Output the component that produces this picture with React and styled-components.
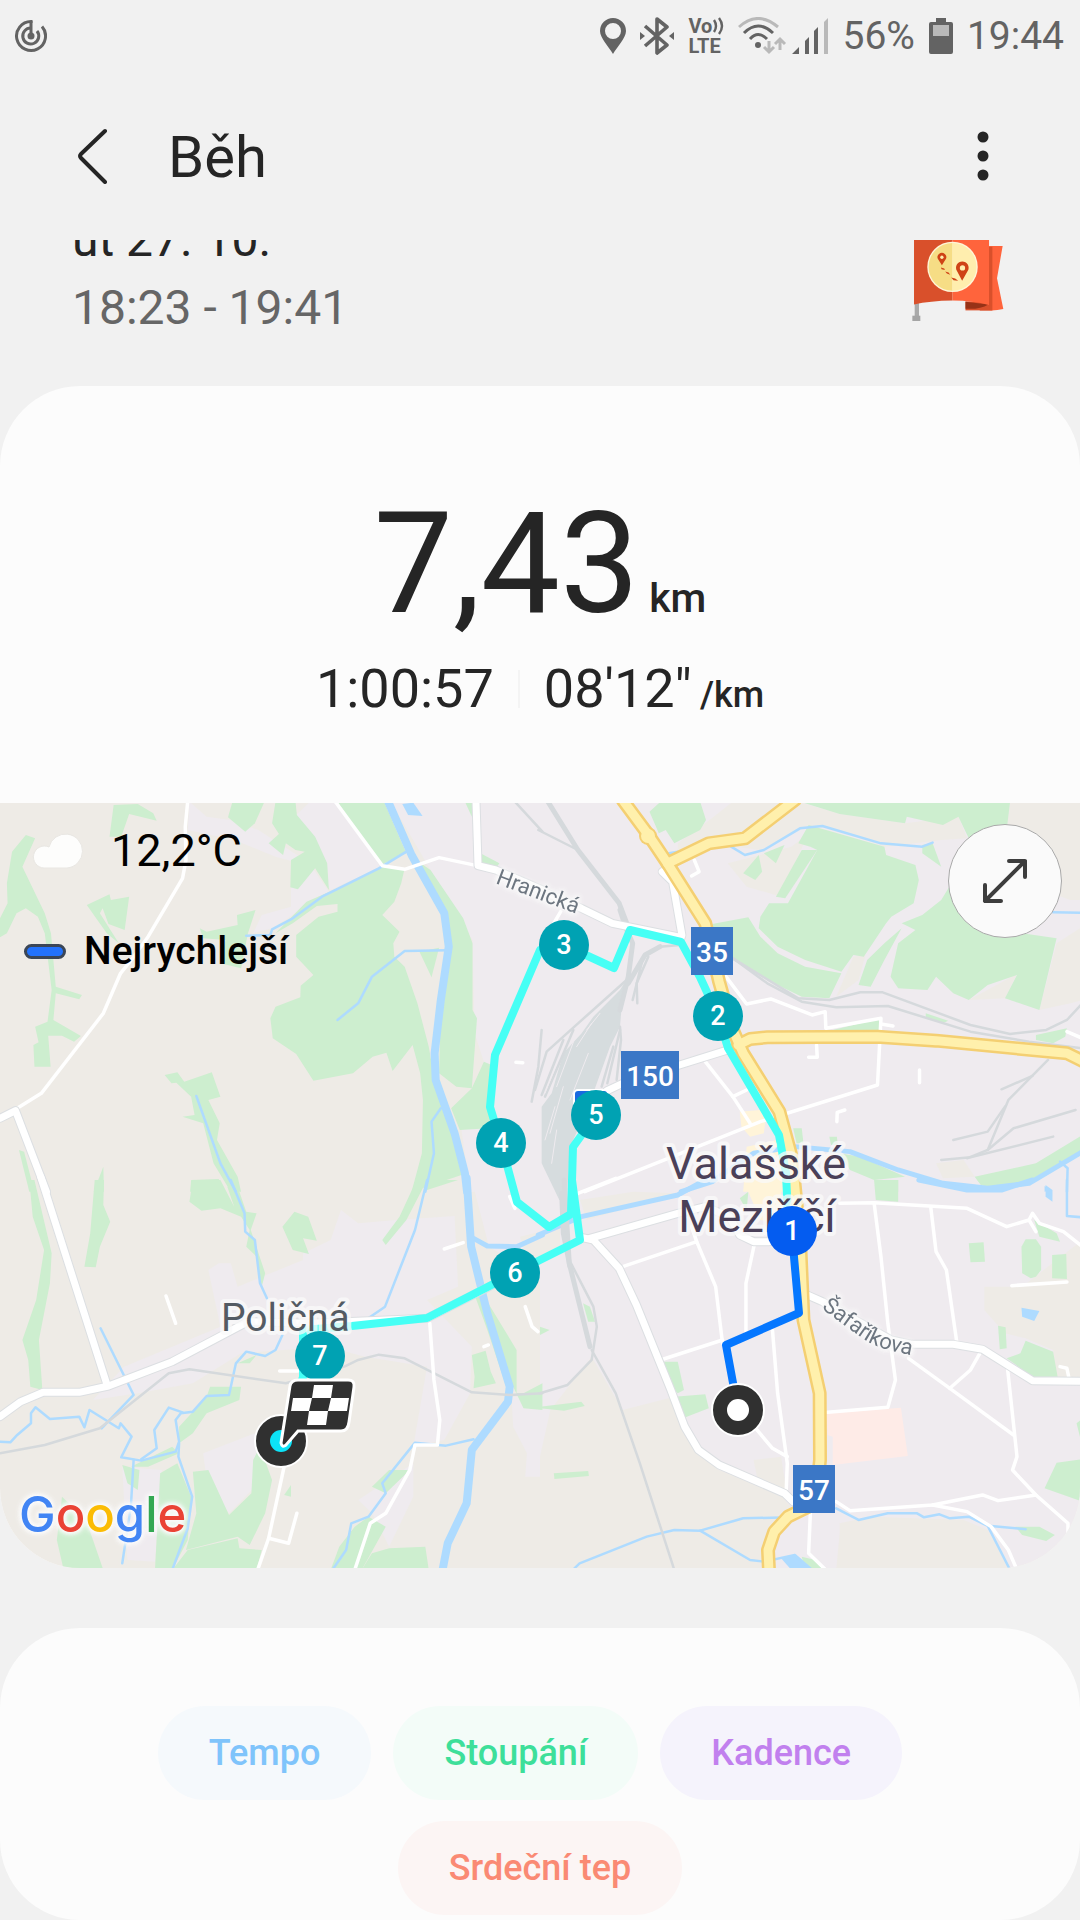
import React from "react"
import styled, { createGlobalStyle } from "styled-components"


//global//
const GlobalStyle = createGlobalStyle`
* { box-sizing: border-box; }
body {
  margin: 0;
  background-color: #f1f1f1;
  color: #252525;
  font-family: Roboto, "Noto Sans", sans-serif;
}
`
const Screen = styled.div`
display: flex;
flex-direction: column;
`

//status bar//
const StatusBar = styled.div`
display: flex;
align-items: center;
justify-content: space-between;
height: 72px;
padding: 0 16px 0 15px;
color: #636363;
`
const StatusGroup = styled.div`
display: flex;
align-items: center;
gap: 14px;
font-size: 39px;
line-height: 72px;
`
const VoLte = styled.span`
display: flex;
flex-direction: column;
width: 36px;
font-size: 20px;
font-weight: 700;
line-height: 20px;
white-space: nowrap;
`
const VoRow = styled.span`
display: flex;
align-items: center;
gap: 1px;
`

//header//
const Header = styled.header`
display: flex;
align-items: center;
height: 168px;
padding: 0 72px 0 67px;
gap: 51px;
`
const IconButton = styled.button`
display: flex;
align-items: center;
justify-content: center;
width: 50px;
height: 72px;
padding: 0;
border: none;
background: none;
color: #252525;
`
const Title = styled.h1`
flex: 1;
margin: 0;
padding-top: 2px;
font-size: 58px;
font-weight: 400;
line-height: 72px;
`

//datum treninku, castecne odscrollovane//
const Summary = styled.section`
display: flex;
justify-content: space-between;
align-items: flex-start;
height: 146px;
padding: 0 75px 0 72px;
overflow: hidden;
`
const SummaryText = styled.div`
margin-top: -34px;
font-size: 48px;
line-height: 68px;
`
const DateLine = styled.div`
color: #252525;
`
const TimeLine = styled.div`
color: #666666;
`

//karta//
const Card = styled.section`
border-radius: 80px;
background-color: #fcfcfc;
overflow: hidden;
`
const Stats = styled.div`
display: flex;
flex-direction: column;
align-items: center;
padding: 94px 20px 73px;
`
const Distance = styled.div`
font-size: 141px;
line-height: 168px;
`
const Unit = styled.span`
margin-left: ${(props) => props.$gap};
font-size: ${(props) => props.$size};
font-weight: 500;
line-height: 1;
`
const StatsRow = styled.div`
display: flex;
align-items: center;
gap: 24px;
font-size: 54px;
line-height: 82px;
`
const Divider = styled.span`
width: 2px;
height: 38px;
background-color: #f4f4f4;
`

//mapa//
const MapBox = styled.div`
position: relative;
`
const MapSvg = styled.svg`
display: block;
width: 100%;
height: auto;
background-color: #eeebe6;
font-family: Roboto, "Noto Sans", sans-serif;
`
const Halo = styled.g`
filter: drop-shadow(0 0 2px #fafafa) drop-shadow(0 0 2px #fafafa) drop-shadow(0 0 2px #fafafa);
`
const Weather = styled.div`
position: absolute;
top: 20px;
left: 32px;
display: flex;
align-items: center;
gap: 27px;
color: #000;
font-size: 45px;
line-height: 56px;
`
const Legend = styled.div`
position: absolute;
top: 120px;
left: 24px;
display: flex;
align-items: center;
gap: 18px;
color: #000;
font-size: 39px;
font-weight: 500;
line-height: 56px;
`
const LegendPill = styled.span`
width: 42px;
height: 15px;
border: 3px solid #3b4657;
border-radius: 8px;
background-color: #2272fc;
`
const ExpandButton = styled.button`
position: absolute;
top: 21px;
right: 18px;
display: flex;
align-items: center;
justify-content: center;
width: 114px;
height: 114px;
padding: 0;
border: 1px solid #a9a9a9;
border-radius: 50%;
background-color: #fafafa;
color: #3d3d3d;
`

//grafy//
const ChartCard = styled(Card)`
display: flex;
flex-direction: column;
gap: 21px;
margin-top: 60px;
padding: 78px 0 5px;
`
const ChipRow = styled.div`
display: flex;
justify-content: center;
gap: 22px;
padding-right: ${(props) => props.$trailing || "0"};
`
const Chip = styled.button`
height: 94px;
padding: 0 51px;
border: none;
border-radius: 47px;
background-color: ${(props) => props.$bg};
color: ${(props) => props.$color};
font-family: inherit;
font-size: 36px;
font-weight: 500;
`

// mapa je slozena z dlazdic, body jsou v souradnicich dlazdice
const TILES = {
    nw: "matrix(.3444 0 0 .3333 0 -3)",
    ne: "matrix(.3444 0 0 .3333 540 -3)",
    sw: "matrix(.3444 0 0 .3333 0 377)",
    se: "matrix(.3444 0 0 .3333 540 377)",
    yard: "matrix(.3333 0 0 .3333 520 97)",
}

const URBAN = {
    nw: [
        "550,5 600,50 670,60 750,90 885,180 870,190 800,170 680,120 545,90",
        "860,45 900,5 980,5 1105,200 960,270 915,205",
        "735,400 760,345 845,320 845,265 905,200 955,275 790,385",
        "1135,5 1575,5 1575,1175 1365,1175 1340,990 1405,785 1378,700 1372,420 1250,210",
    ],
    ne: ["0,5 1575,5 1575,1175 0,1175"],
    sw: [
        "270,660 360,560 640,440 605,270 635,250 670,250 690,320 880,240 880,220 960,180 990,90 1040,130 1150,120 1320,108 1330,320 1240,360 1370,500 1365,640 1290,780 1200,800 1240,560 1060,530 950,500 700,520 560,610 400,640",
        "1370,0 1575,0 1575,300 1420,200",
        "590,820 740,760 760,900 665,1000 600,900",
        "355,860 470,870 450,1145 370,1140",
        "1040,960 1200,850 1200,950 1130,1100 1080,1000",
        "1485,650 1575,650 1575,890 1525,890 1530,820 1490,740",
    ],
    se: ["0,0 1575,0 1575,1175 0,1175"],
}

const FIELD = {
    ne: [
        "400,130 480,70 560,5 750,5 870,42 1060,70 1215,50 1240,115 1165,120 1000,140 820,75 750,90 640,150 560,140 600,115 490,130 400,170",
        "1365,5 1575,5 1575,300 1540,300 1380,240 1350,120",
        "1500,430 1575,380 1575,600 1540,610 1450,630",
        "545,190 640,165 730,140 780,100 735,200 700,290 600,260",
        "1150,1090 1230,1080 1262,1130 1170,1135",
        "910,470 945,465 925,540 860,590",
        "1245,600 1385,522 1350,595",
    ],
    se: [
        "0,830 30,690 150,530 240,690 390,650 410,740 450,810 520,870 700,945 735,990 690,1010 640,1170 0,1170",
        "870,1060 870,1030 960,1010 1230,1020 1300,1050 1370,1170 860,1170",
        "1290,320 1400,320 1575,180 1575,600 1500,590 1490,510 1410,475 1350,460 1290,390",
        "620,840 700,830 715,930 630,890",
    ],
    yard: ["180,900 340,875 470,880 200,960", "0,1010 120,980 120,1060 30,1100"],
}

const GREEN = {
    nw: [
        "75,105 102,115 65,200 130,340 148,400 162,560 238,585 230,598 162,580 155,660 235,708 215,725 180,707 140,707 147,800 100,800 97,735 112,727 102,680 138,665 150,570 130,400 110,350 75,325 48,340 20,400 0,412 0,355 22,310 20,250 35,155",
        "330,15 400,12 445,40 455,62 375,42 352,110 318,110",
        "252,315 318,283 322,300 375,290 362,390 315,372 298,325 290,340 345,430 310,400",
        "675,5 768,5 740,70 712,95 662,52",
        "800,5 858,5 862,45 915,110 950,190 955,270 915,205 865,268 843,262 845,180 885,155 858,150 830,130 822,165 780,130 810,102 790,70",
        "980,5 1115,5 1180,160 1105,195",
        "1105,200 1175,205 1165,250 1145,305 1110,345 1160,395 1142,430 1145,470 1175,500 1212,610 1245,740 1265,860 1300,950 1355,1120 1195,1175 1225,1060 1228,900 1220,820 1198,735 1140,813 1122,758 1082,770 1025,820 910,842 860,762 792,715 785,655 800,620 872,592 873,557 910,525 860,470 860,405 925,350 980,335 980,312 920,318 850,370 800,400 890,305 990,260",
        "1215,185 1250,210 1345,355 1372,430 1372,630 1385,655 1370,865 1325,860 1275,820 1280,600 1310,430 1280,330",
        "1405,785 1440,800 1420,985 1335,990 1310,925 1370,865",
        "580,385 600,395 690,375 688,345 742,330 720,400 700,505 640,490 655,420 590,415",
        "478,825 515,817 535,845 615,817 640,890 605,900 638,970 630,1020 690,1130 700,1175 670,1175 620,1090 590,970 530,950 565,945 555,890 512,848 498,850",
        "555,1140 635,1137 650,1175 552,1175",
        "1218,455 1275,443 1253,532",
        "300,1100 302,1175 272,1175",
        "55,1050 70,1055 100,1175 85,1175",
        "1395,160 1450,190 1440,205 1395,195",
        "1350,5 1372,5 1370,50",
    ],
    ne: [
        "318,35 350,5 465,5 482,60 465,90 390,130 365,90 345,100",
        "755,5 1365,5 1355,90 1245,115 1215,50 1170,75 1065,50 1060,70 870,42",
        "780,75 1000,140 1005,165 1090,195 1100,240 1085,310 1020,350 1005,370 940,470 910,465 875,515 770,480 690,440 635,385 640,350 665,310 720,310 805,150 785,140 750,130",
        "685,290 760,150 805,150 712,295",
        "590,220 635,165 645,215 625,240",
        "650,160 710,135 685,190",
        "500,372 605,352 640,410 690,460 770,500 875,520 840,595 760,590 660,540 560,480 500,440",
        "1110,345 1165,300 1215,215 1270,370 1400,400 1500,415 1450,630 1350,595 1385,525 1300,555 1245,600 1200,580 1150,530 1125,570 1040,565 1018,530 1040,430 1090,390 1050,370",
        "1000,430 1050,385 1000,480 960,560 925,555 950,480",
        "1110,135 1140,130 1165,200 1110,160",
        "850,690 990,655 985,690",
        "1120,640 1185,662 1170,670 1120,655",
        "1440,705 1530,685 1525,710 1490,730 1440,720",
        "735,985 760,985 765,1030 745,1030",
        "840,1010 862,1010 865,1035 845,1035",
        "870,1060 930,1070 1060,1130 970,1140 900,1110",
        "1262,1130 1440,1090 1575,1005 1575,1050 1400,1155 1280,1155",
        "975,1140 1040,1140 1040,1175 975,1175",
    ],
    sw: [
        "85,0 100,0 150,220 145,310 113,480 123,630 88,620 82,540 65,480 105,360 128,210 95,110",
        "275,0 302,0 300,75 320,125 290,200 278,262 245,260 262,160",
        "560,0 640,0 680,80 660,20 690,20 715,95 745,100 728,150 770,280 760,320 745,230 715,200 725,150 700,110 640,85 585,92 550,65",
        "820,140 855,95 895,110 920,182 880,175 897,222 850,210",
        "1205,10 1240,0 1180,120 1120,195 1110,180 1160,110",
        "1215,0 1330,0 1240,30",
        "1370,525 1410,512 1425,575 1440,610 1375,625 1378,590",
        "1380,350 1400,340 1500,510 1500,640 1520,640 1575,610 1575,690 1520,685 1490,620 1470,620 1415,450",
        "520,740 600,650 610,620 700,620 695,660 600,700 560,760 520,790",
        "355,855 405,870 400,930 370,910",
        "380,860 500,800 520,820 430,860",
        "465,880 515,850 555,950 545,1080 500,1170 450,1170",
        "560,875 605,870 665,1005 730,940 735,840 755,800 790,900 770,1000 725,1095 690,1070 540,1110 570,1000",
        "545,1110 690,1075 695,1105 760,1110 745,1170 500,1170",
        "180,950 250,1020 300,1170 185,1170 165,1080",
        "985,1100 1030,1040 1070,1010 1120,1040 1050,1170 960,1170",
        "1080,1120 1130,1105 1235,1100 1245,1170 1050,1170",
        "1080,920 1130,870 1190,870 1120,940",
        "825,945 845,915 845,950",
        "690,550 745,525 725,550",
    ],
    se: [
        "360,545 400,545 418,630 400,640 380,620",
        "390,650 480,643 490,685 415,715",
        "0,680 120,665 130,678 70,692 0,685",
        "40,880 140,873 142,888 42,897",
        "125,370 145,380 160,425 140,425",
        "0,440 28,450 0,465",
        "580,55 605,35 600,90",
        "1245,190 1288,187 1292,245 1250,247",
        "1398,200 1410,178 1440,178 1455,200 1455,270 1440,290 1425,295 1400,280",
        "1487,225 1528,222 1530,297 1487,295",
        "1330,437 1352,442 1355,505 1335,508",
        "1410,482 1490,515 1503,590 1430,590 1355,535 1395,520",
        "1500,848 1575,838 1575,965 1465,925",
        "1558,730 1575,715 1575,800",
        "1380,1040 1450,1040 1495,1065 1470,1083 1400,1065",
        "1435,120 1500,160 1510,185 1450,170",
        "760,1130 800,1140 825,1170 770,1170",
        "970,0 1040,0 1040,65 975,60",
        "1270,0 1380,0 1340,20 1290,20",
    ],
}

const CENTRE = {
    ne: ["580,935 640,930 655,960 650,1000 610,1010 585,980", "600,1040 690,1020 715,1175 590,1175"],
    se: ["590,0 700,0 700,130 640,120"],
}
const HOSPITAL = { se: ["832,700 1048,683 1068,828 850,855 850,770 835,765"] }
const POND = {
    nw: ["1168,12 1200,8 1227,48 1185,45"],
    ne: ["1465,1158 1485,1170 1465,1175"],
    se: ["1398,383 1450,393 1435,423 1400,410", "1468,15 1488,30 1488,65 1468,50", "700,1135 740,1125 790,1170 730,1170"],
}
const RAIL_YARD = {
    yard: ["325,230 305,320 300,380 270,440 205,620 150,740 140,900 118,900 65,790 65,620 95,580 130,460 185,400 220,350 300,270"],
}

const STREAMS = {
    nw: [
        "1180,155 1100,205 935,290 850,355 790,388 785,405 715,407",
        "1300,451 1175,453 1080,530 1040,610 980,660",
        "570,888 640,1090 685,1175",
        "1280,925 1253,965 1260,1060 1235,1175",
    ],
    ne: [
        "555,140 595,165 650,150 755,85 820,78 990,130 1110,140 1140,128",
        "375,160 400,155",
        "1490,337 1575,338",
        "1510,1085 1532,1105 1530,1175",
    ],
    sw: [
        "292,445 388,645 295,745",
        "0,785 30,787 50,765 90,730 90,700 103,682 145,717 230,710 245,742 260,690 345,745 350,730 382,770 352,832 410,842 510,815 520,785 510,720 525,700 560,695 600,648 665,645 685,550 715,515 770,528 800,510 820,465",
        "410,838 455,805 448,750 490,683 530,697",
        "388,840 380,980 355,1150",
        "520,790 518,830 558,950 545,1045 500,1170",
        "670,0 710,100 712,155 740,180 755,310 775,355",
        "1240,0 1205,150 1118,380 1065,418 960,410",
        "1375,778 1295,797 1205,788 1110,910 1120,940 1070,1010 1020,1030 1005,1110 965,1170",
    ],
    se: [
        "100,1165 115,1150 310,1070 390,1050 465,1052 590,1015 730,1012",
        "465,1052 610,1140 650,1145 740,1125 790,1170",
        "860,985 925,1020 1010,1000 1095,1000 1115,1012 1160,1003 1190,1015 1245,1010 1300,1038 1365,1170",
        "1310,1038 1410,1048",
        "1530,0 1530,108 1575,112",
    ],
}
const CHANNELS = {
    ne: [
        "410,1175 500,1145 620,1060 740,1040 900,1055 1040,1110 1170,1150 1300,1165 1420,1150 1575,1055",
    ],
    sw: ["1375,175 1415,198 1500,200 1575,165"],
    se: ["-5,165 120,110 400,45 480,0", "1100,0 1240,30 1340,30 1430,0"],
}
const RIVER = {
    nw: ["1125,0 1195,165 1290,340 1303,440 1280,600 1262,760 1265,840 1320,1000 1350,1120 1356,1175"],
    sw: ["1355,-5 1368,200 1415,400 1480,620 1475,665 1370,810 1355,970 1300,1090 1285,1170"],
}

const RAILS = {
    nw: ["1495,5 1575,95"],
    ne: [
        "-5,90 110,150",
        "560,475 660,550 760,605 860,622 1010,618 1250,695 1420,725 1575,745",
        "560,475 750,595 840,600 930,577 995,577 1250,675 1365,702 1470,690 1530,660 1575,610",
        "1475,780 1360,900 1300,1050",
        "1200,1020 1300,995 1350,920",
        "1340,868 1430,828",
        "1240,1075 1300,1050 1375,985 1555,930",
        "1165,1080 1250,1072 1490,1010",
    ],
    sw: ["0,820 130,795 290,745 490,580 550,568 830,610 1000,560 1040,540 1100,524 1175,535 1370,637 1480,645 1575,640"],
    se: ["90,250 155,380 165,440 150,540 80,615 0,640", "150,510 220,640 290,850 390,1170"],
    yard: [
        "65,390 55,500 35,605",
        "320,240 180,365 80,455 45,570",
        "130,420 65,585",
        "160,390 75,590",
        "480,135 420,140 375,165 320,260",
        "385,170 350,250 352,310",
        "365,190 338,300",
        "300,380 303,420 290,540",
        "300,390 262,550",
        "280,440 245,560",
    ],
}
const WIDE_RAILS = {
    ne: ["20,0 110,150 230,310 252,370"],
    se: ["70,0 85,250 145,500"],
    yard: ["300,30 320,90 338,130 325,230 300,330", "420,140 375,165 325,250", "125,880 130,1000 150,1100"],
}
const YARD_GAPS = {
    yard: ["205,460 150,600", "130,440 75,580", "170,400 110,560", "215,370 170,440", "130,560 90,700", "105,620 75,720", "240,340 200,390", "110,690 95,790"],
}

const LANES = {
    nw: [
        "545,5 538,80 540,180 530,235 430,410 385,475 350,520 300,640 120,880 50,925",
        "970,0 1110,197 1175,208 1275,173 1385,197",
        "1498,787 1518,788",
    ],
    ne: [
        "130,1175 640,965 980,855 990,655 830,685 828,635 790,645 670,597 600,612 540,530",
        "480,785 560,890 610,970",
        "560,890 600,870",
        "448,180 462,215 440,228",
        "803,735 805,772 780,772",
        "1102,810 1102,848",
        "885,930 863,937 862,965",
        "1530,695 1575,715",
        "990,672 1025,678",
        "40,370 60,335",
    ],
    sw: [
        "482,348 510,430",
        "1290,207 1345,188",
        "1248,430 1260,600 1277,720 1270,795 1205,795 1190,870 1120,1000 1075,1030 1030,1170",
        "825,860 780,1075 748,1170",
        "780,1075 838,1090 862,1000",
        "812,573 865,573",
        "1525,380 1545,440 1562,455",
        "1480,50 1495,85",
        "1405,500 1418,495",
    ],
    se: [
        "110,40 220,-5",
        "870,70 970,68 1240,85 1355,140 1420,120 1430,100 1450,130 1520,155 1575,200",
        "1420,120 1440,155",
        "970,68 990,230 1010,430 1032,600 1010,682 835,697",
        "1135,85 1150,215 1180,270 1210,485",
        "1070,535 1190,625 1375,765",
        "1190,625 1250,570 1280,515",
        "1358,570 1385,830 1372,870 1440,945 1533,1030 1533,1060",
        "860,965 900,992 1140,975 1285,945 1330,962 1440,945",
        "1140,975 1240,995 1310,1040 1360,1110 1385,1170",
        "240,260 455,185 510,320 530,490",
        "530,480 350,540",
        "455,185 440,140",
        "622,195 598,310 598,470",
        "675,450 690,640 718,850 715,930",
        "630,750 675,805 718,830",
        "785,1000 780,1120 830,1170",
        "1370,317 1530,306",
        "1510,560 1530,565 1535,590",
    ],
}
const STREETS = {
    nw: ["0,955 45,932 135,1175", "1382,0 1388,197 1440,210 1575,270"],
    ne: [
        "0,270 120,325 210,370 410,412",
        "355,215 385,245 412,405",
        "195,872 240,850 405,795 560,745",
    ],
    sw: ["118,-10 310,612", "0,710 60,665 125,637 230,637 315,618 500,545 720,425 900,430 1240,415 1430,315"],
    se: [
        "120,172 155,180 230,265 280,375 380,630 420,740 460,810 520,855 710,940 735,965",
        "145,175 400,100 480,80 550,110 580,165 620,185 665,185",
        "765,340 820,365 1020,480 1080,493 1200,493 1285,508 1430,602 1575,604",
    ],
}
const HIGHWAYS = {
    ne: [
        "240,0 315,105 370,190 480,370 520,545 560,690 590,760 695,935 728,1060 740,1185",
        "370,190 490,130 595,115 740,0",
        "575,735 610,717 660,712 980,710 1150,722 1530,760 1580,785",
    ],
    se: ["737,-10 755,180 765,420 812,640 813,840 800,970 720,1010 680,1055 662,1110 665,1175"],
}

const ROUTE = "788,415 786,370 779,332 728,245 718,213 700,174 681,139 630,127 614,165 564,142 540,147 495,252 490,304 501,340 517,399 549,424 571,411 573,344 596,312 573,344 572,377 580,437 540,457 515,470 427,515 352,523 303,527 303,574 282,639"
const FASTEST = "792,428 794,454 799,510 726,542 738,607"

const KM_PINS = [
    { n: 2, x: 718, y: 213 },
    { n: 3, x: 564, y: 142 },
    { n: 4, x: 501, y: 340 },
    { n: 5, x: 596, y: 312 },
    { n: 6, x: 515, y: 470 },
    { n: 7, x: 320, y: 553 },
    { n: 1, x: 792, y: 428, fastest: true },
]
const SHIELDS = [
    { n: "35", x: 691, y: 124, w: 42 },
    { n: "150", x: 621, y: 248, w: 58 },
    { n: "57", x: 793, y: 662, w: 42 },
]

const Areas = ({ data, fill }) => (
    <g fill={fill}>
        {Object.keys(data).map((tile) => (
            <g key={tile} transform={TILES[tile]}>
                {data[tile].map((points) => <polygon key={points} points={points} />)}
            </g>
        ))}
    </g>
)

const Lines = ({ data, color, width }) => (
    <g fill="none" stroke={color} strokeWidth={width} strokeLinejoin="round" strokeLinecap="round">
        {Object.keys(data).map((tile) => (
            <g key={tile} transform={TILES[tile]}>
                {data[tile].map((points) => (
                    <polyline key={points} points={points} vectorEffect="non-scaling-stroke" />
                ))}
            </g>
        ))}
    </g>
)

const RouteMap = () => (
    <MapSvg viewBox="0 0 1080 765" role="img" aria-label="Mapa trasy">
        <Areas data={URBAN} fill="#efebef" />
        <Areas data={FIELD} fill="#eeebe6" />
        <Areas data={GREEN} fill="#cdeecf" />
        <Areas data={CENTRE} fill="#fff4d9" />
        <Areas data={HOSPITAL} fill="#feebe7" />
        <Areas data={RAIL_YARD} fill="#d6dcde" />
        <Areas data={POND} fill="#aedbff" />
        <Lines data={STREAMS} color="#aedbff" width="2.5" />
        <Lines data={CHANNELS} color="#aedbff" width="5" />
        <Lines data={RIVER} color="#aedbff" width="8" />
        <Lines data={RAILS} color="#d5d9dc" width="2.5" />
        <Lines data={WIDE_RAILS} color="#d5d9dc" width="5" />
        <Lines data={YARD_GAPS} color="#efebef" width="1" />
        <Lines data={LANES} color="#ffffff" width="3.5" />
        <Lines data={STREETS} color="#dcdfe2" width="9" />
        <Lines data={STREETS} color="#ffffff" width="7" />
        <Lines data={HIGHWAYS} color="#f4cf72" width="14" />
        <circle cx="648" cy="33" r="9" fill="#f4cf72" />
        <Lines data={HIGHWAYS} color="#fff0ac" width="9" />
        <circle cx="648" cy="33" r="7" fill="#fff0ac" />

        <g fill="none" strokeLinejoin="round">
            <rect x="574" y="287" width="34" height="34" rx="4" fill="#1a6ae0" stroke="#fff" strokeWidth="2" />
            <polyline points={ROUTE} stroke="#46fff5" strokeWidth="8" />
            <polyline points={FASTEST} stroke="#0577ff" strokeWidth="8" />
        </g>

        <g stroke="#fafafa" strokeOpacity=".75" strokeWidth="8" strokeLinejoin="round" paintOrder="stroke">
            <g fill="#4a4058" fontSize="45" textAnchor="middle">
                <text x="756" y="376">Valašské</text>
                <text x="757" y="429">Meziříčí</text>
            </g>
            <text x="221" y="528" fill="#545b63" fontSize="39">Poličná</text>
        </g>
        <Halo>
            <g fill="#6d7680" fontSize="22">
                <path id="hranicka" d="M495 80 L582 113" fill="none" />
                <path id="safarikova" d="M821 505 Q845 523 862 535 T916 553" fill="none" />
                <text><textPath href="#hranicka">Hranická</textPath></text>
                <text><textPath href="#safarikova">Šafaříkova</textPath></text>
            </g>
        </Halo>
        <Halo>
            <text x="19" y="729" fontFamily="Inter, Roboto, sans-serif" fontSize="49" fontWeight="500">
                <tspan fill="#4285f4">G</tspan>
                <tspan fill="#ea4335">o</tspan>
                <tspan fill="#fbbc05">o</tspan>
                <tspan fill="#4285f4">g</tspan>
                <tspan fill="#34a853">l</tspan>
                <tspan fill="#ea4335">e</tspan>
            </text>
        </Halo>

        {SHIELDS.map((s) => (
            <g key={s.n}>
                <rect x={s.x} y={s.y} width={s.w} height="48" fill="#3b77c6" />
                <text x={s.x + s.w / 2} y={s.y + 35} fill="#fff" fontSize="28" fontWeight="500" textAnchor="middle">{s.n}</text>
            </g>
        ))}

        {KM_PINS.map((p) => (
            <g key={p.n}>
                <circle cx={p.x} cy={p.y} r="25" fill={p.fastest ? "#045cf0" : "#00a2b3"} />
                <text x={p.x} y={p.y + 9} fill="#fff" fontSize="27" fontWeight="500" textAnchor="middle">{p.n}</text>
            </g>
        ))}

        {/* start */}
        <circle cx="738" cy="607" r="26" fill="#303030" stroke="#fff" strokeWidth="2" />
        <circle cx="738" cy="607" r="11" fill="#fff" />
        {/* cil */}
        <circle cx="281" cy="638" r="26" fill="#303030" stroke="#fff" strokeWidth="2" />
        <circle cx="281" cy="638" r="11" fill="#0ce3f7" />
        <path d="M298 577 H348 Q355 577 354 584 L349 619 Q348 628 341 628 H298 L286 642 Q282 645 281 640 L290 583 Q291 577 298 577Z" fill="#303030" stroke="#fff" strokeWidth="3" />
        <path d="M314 582 H333 L331 595 H349 L347 608 H328 L326 622 H307 L309 608 H291 L293 595 H312Z" fill="#fff" />
        <path d="M312 595 H331 L328 608 H309Z" fill="#303030" />
    </MapSvg>
)

const FlagBadge = () => (
    <svg width="93" height="81" viewBox="96 60 280 244" aria-hidden="true">
        <rect x="104" y="240" width="13" height="50" fill="#aaaaaa" />
        <rect x="97" y="288" width="24" height="16" fill="#a5a5a5" />
        <path d="M328 78 H369 L352 175 L371 268 Q350 273 328 272Z" fill="#ff643c" />
        <path d="M328 80 H338 V272 H300Z" fill="#d9502b" />
        <path d="M257 245 H328 V272 H257Z" fill="#d9502b" />
        <path d="M257 246 L326 254 Q300 270 257 267Z" fill="#963217" />
        <path d="M102 60 H218 V242 Q150 243 102 254Z" fill="#d9502b" />
        <path d="M218 60 H328 V256 Q280 242 218 242Z" fill="#ff643c" />
        <circle cx="218" cy="141" r="76" fill="#fff6d8" />
        <path d="M218 69 A72 72 0 0 0 218 213Z" fill="#f6dd85" />
        <path d="M218 69 A72 72 0 0 1 218 213Z" fill="#ffeeae" />
        <g fill="#cf4316">
            <path d="M186 136 L176 120 A13 13 0 1 1 196 120Z" />
            <path d="M247 183 L231 153 A19 19 0 1 1 264 153Z" />
            <path d="M183 143 l10 3 2 4 -10 -2Z M196 155 l10 3 5 7 -10 -4Z M214 173 l12 3 9 7 -14 -2Z" />
        </g>
        <circle cx="186" cy="112" r="5" fill="#ffeeae" />
        <circle cx="248" cy="144" r="8" fill="#ffeeae" />
    </svg>
)

const TopStatus = () => (
    <StatusBar>
        <svg width="32" height="34" viewBox="0 0 32 34" fill="none" stroke="#636363" strokeWidth="3" aria-hidden="true">
            <path d="M17.500 2.500 H16 A14.500 14.500 0 1 0 27 7.500" />
            <path d="M16 9 A8 8 0 1 0 22 12" />
            <path d="M16 2 V17" />
            <circle cx="16" cy="17" r="3.500" fill="#636363" stroke="none" />
        </svg>
        <StatusGroup>
            <svg width="26" height="36" viewBox="0 0 26 36" fill="#636363" aria-hidden="true">
                <path fillRule="evenodd" d="M13 0 A13 13 0 0 1 26 13 C26 20 17 29 13 36 C9 29 0 20 0 13 A13 13 0 0 1 13 0Z M13 5 A8 8 0 1 0 13 21 A8 8 0 1 0 13 5Z" />
            </svg>
            <svg width="34" height="38" viewBox="0 0 34 38" fill="none" stroke="#636363" strokeWidth="3.6" strokeLinejoin="round" aria-hidden="true">
                <path d="M5 9 L27 28 L17 36 V2 L27 10 L5 29" />
                <path d="M0 15 L5 19 L0 23Z M34 15 L29 19 L34 23Z" fill="#636363" stroke="none" />
            </svg>
            <VoLte>
                <VoRow>
                    Vo
                    <svg width="11" height="18" viewBox="0 0 11 18" fill="none" stroke="#636363" strokeWidth="2.4" aria-hidden="true">
                        <path d="M1 3 Q5 9 1 15 M6 1 Q12 9 6 17" />
                    </svg>
                </VoRow>
                <span>LTE</span>
            </VoLte>
            <svg width="90" height="38" viewBox="0 0 90 38" fill="none" strokeWidth="3" aria-hidden="true">
                <path d="M1 10 Q20 -7 40 10" stroke="#b9b9b9" />
                <path d="M6 16 Q20 2 35 16 M12 22 Q20 13 29 22" stroke="#636363" />
                <circle cx="20" cy="28" r="3" fill="#636363" />
                <path d="M31 24 V34 M26 30 L31 35 L36 30 M42 33 V22 M37 27 L42 22 L47 27" stroke="#b9b9b9" />
                <path d="M54 37 L61 30 V37Z M67 24 L71 20 V37 H67Z M76 14 L80 10 V37 H76Z" fill="#636363" />
                <path d="M86 5 L90 1 V37 H86Z" fill="#b9b9b9" />
            </svg>
            <span>56%</span>
            <svg width="24" height="36" viewBox="0 0 24 36" aria-hidden="true">
                <path d="M7 0 H17 V4 H22 Q24 4 24 6 V34 Q24 36 22 36 H2 Q0 36 0 34 V6 Q0 4 2 4 H7Z" fill="#636363" />
                <rect x="4" y="7" width="16" height="11" fill="#b9b9b9" />
            </svg>
            <span>19:44</span>
        </StatusGroup>
    </StatusBar>
)

const App = () => {
    return (
        <>
            <GlobalStyle />
            <Screen>
                <TopStatus />
                <Header>
                    <IconButton aria-label="Zpět">
                        <svg width="32" height="56" viewBox="0 0 32 56" fill="none" stroke="currentColor" strokeWidth="4" strokeLinecap="round" strokeLinejoin="round" aria-hidden="true">
                            <path d="M29 3 L5 26 Q3 28 5 30 L29 54" />
                        </svg>
                    </IconButton>
                    <Title>Běh</Title>
                    <IconButton aria-label="Další možnosti">
                        <svg width="12" height="50" viewBox="0 0 12 50" fill="currentColor" aria-hidden="true">
                            <circle cx="6" cy="6" r="5.500" />
                            <circle cx="6" cy="25" r="5.500" />
                            <circle cx="6" cy="44" r="5.500" />
                        </svg>
                    </IconButton>
                </Header>
                <Summary>
                    <SummaryText>
                        <DateLine>út 27. 10.</DateLine>
                        <TimeLine>18:23 - 19:41</TimeLine>
                    </SummaryText>
                    <FlagBadge />
                </Summary>
                <Card>
                    <Stats>
                        <Distance>7,43<Unit $size="41px" $gap="10px">km</Unit></Distance>
                        <StatsRow>
                            <span>1:00:57</span>
                            <Divider />
                            <span>08'12"<Unit $size="36px" $gap="8px">/km</Unit></span>
                        </StatsRow>
                    </Stats>
                    <MapBox>
                        <RouteMap />
                        <Weather>
                            <svg width="52" height="36" viewBox="0 0 52 36" fill="#fdfdfc" stroke="#e9e7e3" aria-hidden="true">
                                <path d="M12 35 A11 11 0 1 1 17 14 A17 17 0 1 1 35 35Z" />
                            </svg>
                            <span>12,2°C</span>
                        </Weather>
                        <Legend>
                            <LegendPill />
                            <span>Nejrychlejší</span>
                        </Legend>
                        <ExpandButton aria-label="Zvětšit mapu">
                            <svg width="46" height="46" viewBox="0 0 46 46" fill="none" stroke="currentColor" strokeWidth="4" strokeLinecap="round" strokeLinejoin="round" aria-hidden="true">
                                <path d="M3 43 L43 3 M27 3 H43 V19 M3 27 V43 H19" />
                            </svg>
                        </ExpandButton>
                    </MapBox>
                </Card>
                <ChartCard>
                    <ChipRow $trailing="20px">
                        <Chip $color="#7fc4fb" $bg="#f5f9fc">Tempo</Chip>
                        <Chip $color="#3ddf9a" $bg="#f3fcf8">Stoupání</Chip>
                        <Chip $color="#c180ee" $bg="#f5f3fc">Kadence</Chip>
                    </ChipRow>
                    <ChipRow>
                        <Chip $color="#fa8a74" $bg="#fcf5f4">Srdeční tep</Chip>
                    </ChipRow>
                </ChartCard>
            </Screen>
        </>
    )
}

export default App
